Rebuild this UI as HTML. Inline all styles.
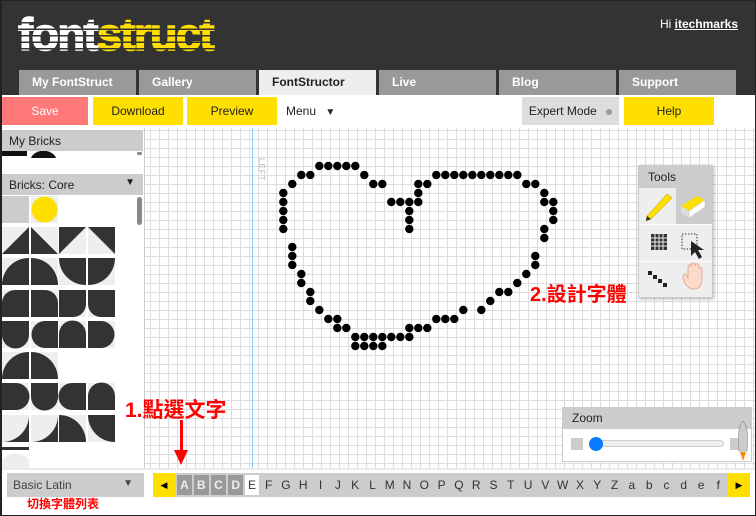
<!DOCTYPE html>
<html><head><meta charset="utf-8"><style>
*{margin:0;padding:0;box-sizing:border-box}
body{width:756px;height:516px;overflow:hidden;background:#fff;font-family:"Liberation Sans","DejaVu Sans",sans-serif;position:relative}
.a{position:absolute}
#frame{left:0;top:0;width:756px;height:516px;border:1px solid #222;border-left-width:2px;z-index:50;pointer-events:none}
#hdr{left:0;top:0;width:756px;height:95px;background:#333}
.logo{left:18px;top:10px;font:bold 45px "Liberation Sans",sans-serif;letter-spacing:-1.5px;line-height:50px;-webkit-text-stroke:1.5px currentColor}
.stripe{left:18px;top:17px;width:210px;height:34px;background:repeating-linear-gradient(180deg,transparent 0 5px,#333 5px 6.5px)}
.tab{top:70px;height:25px;width:117px;background:#999;color:#fff;font:bold 12px "Liberation Sans",sans-serif;padding:5px 0 0 13px}
.btn{top:97px;height:28px;font-size:12px;text-align:center;line-height:28px;color:#222}
.y{background:#ffdf00}
.grid{left:145px;top:128px;width:611px;height:342px;background-color:#fff;
background-image:linear-gradient(90deg,#ddd 1px,transparent 1px),linear-gradient(180deg,#ddd 1px,transparent 1px);
background-size:9px 9px;background-position:5px 2px}
.red{color:#f00;font-weight:bold;font-family:"Liberation Sans","Noto Sans CJK TC",sans-serif}
.ph{background:#ccc;font-size:12px;color:#222;padding:4px 0 0 7px}
</style></head><body>
<div class="a" id="hdr"></div>
<div class="a logo"><span style="color:#fff">font</span><span style="color:#ffdf00">struct</span></div>
<div class="a stripe"></div>
<div class="a" style="right:18px;top:17px;color:#fff;font-size:12px">Hi <u style="font-weight:bold">itechmarks</u></div>
<div class="a tab" style="left:19px">My FontStruct</div>
<div class="a tab" style="left:139px">Gallery</div>
<div class="a tab" style="left:259px;background:#eee;color:#222">FontStructor</div>
<div class="a tab" style="left:379px">Live</div>
<div class="a tab" style="left:499px">Blog</div>
<div class="a tab" style="left:619px">Support</div>
<div class="a" style="left:0;top:95px;width:756px;height:33px;background:#fff"></div>
<div class="a btn" style="left:2px;width:86px;background:#f77;color:#fff">Save</div>
<div class="a btn y" style="left:93px;width:90px">Download</div>
<div class="a btn y" style="left:187px;width:90px">Preview</div>
<div class="a btn" style="left:286px;width:50px;text-align:left">Menu <span style="font-size:10px;margin-left:6px">▼</span></div>
<div class="a btn" style="left:522px;width:97px;background:#ddd">Expert Mode <span style="display:inline-block;width:6px;height:6px;border-radius:3px;background:#999;margin-left:6px"></span></div>
<div class="a btn y" style="left:624px;width:90px">Help</div>

<div class="a grid"></div>
<div class="a" style="left:252px;top:128px;width:1px;height:342px;background:#8bc4f0"></div>
<div class="a" style="top:158px;font-size:8px;color:#bbb;transform:rotate(90deg);transform-origin:0 0;left:266px;letter-spacing:1px">LEFT</div>

<svg class="a" style="left:0;top:0" width="756" height="516">
<g fill="#000" id="dots"></g>
</svg>

<div class="a" style="left:0;top:128px;width:145px;height:342px;background:#fff;border-right:1px solid #ccc"></div>
<div class="a ph" style="left:2px;top:130px;width:141px;height:21px">My Bricks</div>
<div class="a ph" style="left:2px;top:174px;width:141px;height:21px">Bricks: Core<span style="position:absolute;right:8px;top:3px;font-size:10px">▼</span></div>
<div class="a" style="left:137px;top:197px;width:5px;height:28px;background:#888;border-radius:3px"></div>
<div class="a" style="left:137px;top:152px;width:5px;height:3px;background:#888;border-radius:2px"></div>
<svg class="a" style="left:2px;top:151px" width="135" height="319">
<rect x="0" y="0" width="25" height="5" fill="#111"/>
<path d="M29 7 A13 10 0 0 1 54 7Z" fill="#111"/>
<g transform="translate(0,45)">
<rect x="0" y="0" width="27" height="27" fill="#ccc"/>
<rect x="29" y="0" width="27" height="27" fill="#eee"/><circle cx="42.5" cy="13.5" r="13" fill="#ffdf00"/>
</g>
<g transform="translate(0,76)" fill="#333">
<rect width="27" height="27" fill="#eee"/><path d="M0 27L27 0V27Z"/>
<rect x="29" width="27" height="27" fill="#eee"/><path d="M29 0L56 27H29Z"/>
<rect x="57" width="27" height="27" fill="#eee"/><path d="M57 27V0H84Z"/>
<rect x="86" width="27" height="27" fill="#eee"/><path d="M86 0H113V27Z"/>
</g>
<g transform="translate(0,107)" fill="#333">
<rect width="27" height="27" fill="#eee"/><path d="M27 27H0A27 27 0 0 1 27 0Z"/>
<rect x="29" width="27" height="27" fill="#eee"/><path d="M29 27V0A27 27 0 0 1 56 27Z"/>
<rect x="57" width="27" height="27" fill="#eee"/><path d="M57 0H84V27A27 27 0 0 1 57 0Z"/>
<rect x="86" width="27" height="27" fill="#eee"/><path d="M86 0H113A27 27 0 0 1 86 27Z"/>
</g>
<g transform="translate(0,139)" fill="#333">
<rect width="27" height="27" fill="#eee"/><path d="M0 27V13A13 13 0 0 1 13 0H27V27Z"/>
<rect x="29" width="27" height="27" fill="#eee"/><path d="M29 0H43A13 13 0 0 1 56 13V27H29Z"/>
<rect x="57" width="27" height="27" fill="#eee"/><path d="M57 0H84V14A13 13 0 0 1 71 27H57Z"/>
<rect x="86" width="27" height="27" fill="#eee"/><path d="M86 0H113V27H99A13 13 0 0 1 86 14Z"/>
</g>
<g transform="translate(0,170)" fill="#333">
<rect width="27" height="27" fill="#eee"/><path d="M0 0H27V14A13 13 0 0 1 0 14Z"/>
<rect x="29" width="27" height="27" fill="#eee"/><path d="M56 0V27H43A13 13 0 0 1 43 0Z"/>
<rect x="57" width="27" height="27" fill="#eee"/><path d="M57 27V13A13 13 0 0 1 84 13V27Z"/>
<rect x="86" width="27" height="27" fill="#eee"/><path d="M86 0H99A13 13 0 0 1 99 27H86Z"/>
</g>
<g transform="translate(0,201)" fill="#333">
<rect width="27" height="27" fill="#eee"/><path d="M0 27A27 27 0 0 1 27 0V27Z"/>
<rect x="29" width="27" height="27" fill="#eee"/><path d="M29 0A27 27 0 0 1 56 27H29Z"/>
</g>
<g transform="translate(0,232)" fill="#333">
<rect width="27" height="27" fill="#eee"/><path d="M0 0H14A13 13 0 0 1 14 27H0Z"/>
<rect x="29" width="27" height="27" fill="#eee"/><path d="M29 0H56V14A13 13 0 0 1 29 14Z"/>
<rect x="57" width="27" height="27" fill="#eee"/><path d="M84 27H70A13 13 0 0 1 70 0H84Z"/>
<rect x="86" width="27" height="27" fill="#eee"/><path d="M86 27V13A13 13 0 0 1 113 13V27Z"/>
</g>
<g transform="translate(0,264)">
<rect width="27" height="27" fill="#333"/><path d="M0 27A27 27 0 0 1 27 0V27Z" fill="#eee" transform="rotate(180 13.5 13.5)"/>
<rect x="29" width="27" height="27" fill="#333"/><path d="M29 0A27 27 0 0 1 56 27H29Z" fill="#eee" transform="rotate(90 42.5 13.5)"/>
<rect x="57" width="27" height="27" fill="#eee"/><path d="M57 0H84V27A27 27 0 0 1 57 0Z" fill="#333" transform="rotate(180 70.5 13.5)"/>
<rect x="86" width="27" height="27" fill="#333"/><path d="M86 0V27H113A27 27 0 0 1 86 0Z" fill="#eee"/>
</g>
<path d="M0 319V310A14 10 0 0 1 27 310V319Z" fill="#eee"/><rect x="0" y="296" width="27" height="3" fill="#333"/>
</svg>

<div class="a" style="left:638px;top:165px;width:75px;height:133px;background:#eee;border:1px solid #ccc;box-shadow:1px 1px 3px rgba(0,0,0,.3)">
<div style="background:#ccc;height:22px;font-size:12px;padding:4px 0 0 9px;color:#222">Tools</div>
<div class="a" style="left:37px;top:22px;width:36px;height:36px;background:#ccc"></div>
<div class="a" style="left:0;top:58px;width:73px;height:1px;background:#fff"></div>
<div class="a" style="left:0;top:95px;width:73px;height:1px;background:#fff"></div>
<svg class="a" style="left:0;top:22px" width="73" height="110">
<path d="M8 28L28 6L33 10L12 31L7 33Z" fill="#ffdf00" stroke="#a90" stroke-width=".5"/><path d="M7 33L8 28L12 31Z" fill="#333"/>
<path d="M42 18L58 8L66 12L50 23Z" fill="#ffdf00"/><path d="M42 18L50 23V30L42 25Z" fill="#ddd"/><path d="M50 23L66 12V19L50 30Z" fill="#fff" stroke="#bbb" stroke-width=".5"/>
<rect x="12" y="46" width="16" height="16" fill="#333"/>
<g stroke="#eee" stroke-width="1"><path d="M16 46V62M20 46V62M24 46V62M12 50H28M12 54H28M12 58H28"/></g>
<rect x="43" y="46" width="15" height="15" fill="none" stroke="#333" stroke-dasharray="1.5 1.5"/>
<path d="M52 53L52 68L56 64L60 71L63 69L59 62L65 62Z" fill="#222"/>
<g fill="#222"><rect x="9" y="83" width="4" height="4"/><rect x="14" y="87" width="4" height="4"/><rect x="19" y="91" width="4" height="4"/><rect x="24" y="95" width="4" height="4"/></g>
<path d="M47 97C44 93 43 88 45 86C47 85 48 88 49 90V79C49 76 52 76 52 79V77C52 74 56 74 56 77V78C56 75 60 75 60 78V81C60 79 63 79 63 81V92C63 97 60 101 55 101C51 101 49 99 47 97Z" fill="#fcd9c8" stroke="#d9a58e" stroke-width=".8"/>
</svg>
</div>

<div class="a" style="left:562px;top:407px;width:190px;height:55px;background:#fff;border:1px solid #ccc">
<div style="background:#ccc;height:21px;font-size:12px;padding:3px 0 0 9px;color:#222">Zoom</div>
<div class="a" style="left:8px;top:30px;width:12px;height:12px;background:#ccc"></div>
<div class="a" style="left:26px;top:32px;width:135px;height:7px;background:#eee;border:1px solid #ccc;border-radius:4px"></div>
<div class="a" style="left:26px;top:29px;width:14px;height:14px;border-radius:7px;background:#0a7bff"></div>
<div class="a" style="left:167px;top:30px;width:12px;height:12px;background:#ccc"></div>
<svg class="a" style="left:172px;top:13px" width="16" height="42"><path d="M8 0C3 6 3 14 4 30H12C13 14 13 6 8 0Z" fill="#ccc" stroke="#888" stroke-width=".6"/><path d="M5 31L8 40L11 31Z" fill="#f80"/></svg>
</div>

<div class="a" style="left:0;top:468px;width:756px;height:3px;background:#eaeaea"></div>
<div class="a" style="left:0;top:470px;width:756px;height:46px;background:#fff"></div>
<div class="a" style="left:7px;top:473px;width:137px;height:24px;background:#ccc;font-size:12px;color:#444;padding:5px 0 0 6px">Basic Latin<span style="position:absolute;right:11px;top:5px;font-size:10px">▼</span></div>
<div class="a" style="left:153px;top:473px;width:597px;height:24px;background:#ccc"></div>
<div class="a" style="left:177px;top:475px;height:20px;width:550px;overflow:hidden;display:flex;font-size:12px;line-height:20px;color:#333;white-space:nowrap">
<span style="width:16px;background:#999;color:#eee;text-align:center;margin-right:2px;font-weight:bold">A</span>
<span style="width:16px;background:#999;color:#eee;text-align:center;margin-right:2px;font-weight:bold">B</span>
<span style="width:17px;background:#999;color:#eee;text-align:center;margin-right:2px;font-weight:bold">C</span>
<span style="width:16px;background:#999;color:#eee;text-align:center;margin-right:2px;font-weight:bold">D</span>
<span style="width:15px;background:#fff;text-align:center;margin-right:1px">E</span>
<span id="lt" style="display:flex"></span>
</div>
<div class="a y" style="left:153px;top:473px;width:22px;height:24px;font-size:9px;text-align:center;line-height:24px">◀</div>
<div class="a y" style="left:728px;top:473px;width:22px;height:24px;font-size:9px;text-align:center;line-height:24px">▶</div>

<div class="a red" style="left:125px;top:394px;font-size:21px">1.點選文字</div>
<div class="a" style="left:180px;top:420px;width:3px;height:34px;background:#f00"></div>
<div class="a" style="left:174px;top:450px;width:0;height:0;border-left:7px solid transparent;border-right:7px solid transparent;border-top:15px solid #f00"></div>
<div class="a red" style="left:530px;top:278px;font-size:20px">2.設計字體</div>
<div class="a red" style="left:27px;top:495px;font-size:12px">切換字體列表</div>
<div class="a" id="frame"></div>
<script>
var L="FGHIJKLMNOPQRSTUVWXYZabcdef",h="";
for(var i=0;i<L.length;i++)h+='<span style="width:17.3px;text-align:center">'+L[i]+'</span>';
document.getElementById('lt').innerHTML=h;
var P={0:[[0,4]],1:[[-2,-1],[5,5],[13,22]],2:[[-3,-3],[6,7],[11,12],[23,24]],3:[[-4,-4],[11,11],[25,25]],4:[[-4,-4],[8,11],[25,26]],5:[[-4,-4],[10,10],[26,26]],6:[[-4,-4],[10,10],[26,26]],7:[[-4,-4],[10,10],[25,25]],8:[[25,25]],9:[[-3,-3]],10:[[-3,-3],[24,24]],11:[[-3,-3],[24,24]],12:[[-2,-2],[23,23]],13:[[-2,-2],[22,22]],14:[[-1,-1],[20,21]],15:[[-1,-1],[19,19]],16:[[0,0],[16,16],[18,18]],17:[[1,2],[13,15]],18:[[2,3],[10,12]],19:[[4,10]],20:[[4,7]]};
var s="";for(var j in P)P[j].forEach(function(r){for(var c=r[0];c<=r[1];c++)s+='<circle cx="'+(319.3+9*c)+'" cy="'+(166+9*j)+'" r="4.2"/>';});
document.getElementById('dots').innerHTML=s;
</script>
</body></html>
